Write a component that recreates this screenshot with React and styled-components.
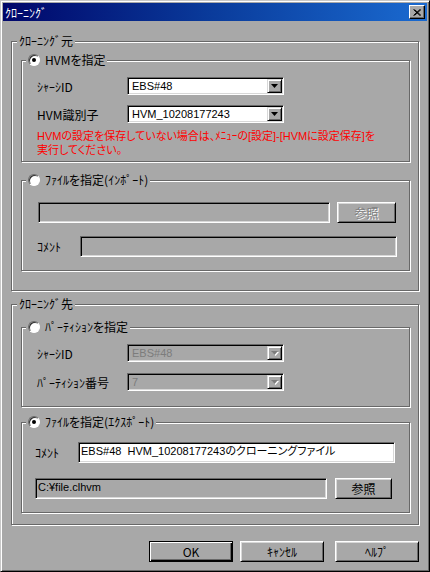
import React from 'react';
import styled, { createGlobalStyle } from 'styled-components';

const FACE = '#a8a8a8';
const FRAME = '#686868';
const LIGHT = '#d8d8d8';

const Global = createGlobalStyle`
  html, body { margin: 0; padding: 0; background: ${FACE}; }
  body {
    font-family: "Noto Sans CJK JP", "Liberation Sans", sans-serif;
    font-size: 12px;
    font-feature-settings: "palt" 1;
    color: #000;
  }
  * { box-sizing: border-box; }
`;

const Window = styled.div`
  width: 430px;
  height: 572px;
  background: ${FACE};
  border: 1px solid;
  border-color: #c8c8c8 #000 #000 #c8c8c8;
  box-shadow: inset 1px 1px #fff, inset -1px -1px ${FRAME};
  padding: 2px;
  display: flex;
  flex-direction: column;
`;

const TitleBar = styled.div`
  height: 18px;
  flex: none;
  background: linear-gradient(90deg, #00066a 0%, #0a3c9c 50%, #1a6ad0 100%);
  display: flex;
  align-items: center;
  justify-content: space-between;
  padding: 0 2px 0 2px;
`;

const Title = styled.span`
  color: #fff;
  line-height: 13px;
  white-space: nowrap;
`;

const CloseBtn = styled.div`
  width: 16px;
  height: 14px;
  background: ${FACE};
  border: 1px solid;
  border-color: #fff #000 #000 #fff;
  box-shadow: inset -1px -1px ${FRAME};
  display: flex;
  align-items: center;
  justify-content: center;
`;

const Body = styled.div`
  flex: 1;
  padding: 0 8px;
  display: flex;
  flex-direction: column;
`;

const Group = styled.div`
  position: relative;
  border: 1px solid ${FRAME};
  box-shadow: inset 1px 1px #fff, 1px 1px #fff;
  margin-top: ${p => p.$mt || 0}px;
  margin-left: ${p => (p.$inner ? 9 : 0)}px;
  width: ${p => (p.$inner ? '389px' : 'auto')};
  padding: ${p => p.$pt}px 0 ${p => p.$pb}px ${p => p.$pl || 0}px;
  display: flex;
  flex-direction: column;
`;

const Legend = styled.div`
  position: absolute;
  top: -8px;
  left: ${p => p.$left}px;
  background: ${FACE};
  padding: 0 2px;
  line-height: 13px;
  height: 13px;
  display: flex;
  align-items: center;
  gap: 5px;
  white-space: nowrap;
`;

const Radio = styled.span`
  position: relative;
  width: 12px;
  height: 12px;
  border-radius: 50%;
  background: #fff;
  border: 1px solid;
  border-color: ${FRAME} #fff #fff ${FRAME};
  box-shadow: inset 1px 1px #303030;
  flex: none;
  &::after {
    content: '';
    display: ${p => (p.$checked ? 'block' : 'none')};
    position: absolute;
    left: 3px;
    top: 3px;
    width: 4px;
    height: 4px;
    border-radius: 50%;
    background: #000;
  }
`;

const Row = styled.div`
  display: flex;
  align-items: center;
  height: ${p => p.$h || 18}px;
  margin-top: ${p => p.$mt || 0}px;
  padding-left: ${p => p.$pl || 0}px;
`;

const Label = styled.span`
  width: ${p => p.$w}px;
  flex: none;
  line-height: 13px;
  white-space: nowrap;
`;

const Field = styled.div`
  width: ${p => p.$w}px;
  height: 21px;
  flex: none;
  border: 1px solid;
  border-color: ${FRAME} #fff #fff ${FRAME};
  box-shadow: inset 1px 1px #000, inset -1px -1px ${LIGHT};
  background: ${p => (p.$disabled ? FACE : '#fff')};
  padding: 2px 2px 0 2px;
  font-family: "Liberation Sans", "Noto Sans CJK JP", sans-serif;
  font-size: 11px;
  line-height: 13px;
  white-space: pre;
  overflow: hidden;
`;

const ComboBox = styled.div`
  width: 157px;
  height: 18px;
  flex: none;
  border: 1px solid;
  border-color: ${FRAME} #fff #fff ${FRAME};
  box-shadow: inset 1px 1px #000, inset -1px -1px ${LIGHT};
  background: ${p => (p.$disabled ? FACE : '#fff')};
  color: ${p => (p.$disabled ? '#7c7c7c' : '#000')};
  padding: 1px 1px 1px 4px;
  display: flex;
  align-items: center;
  justify-content: space-between;
  font-family: "Liberation Sans", "Noto Sans CJK JP", sans-serif;
  font-size: 11px;
  line-height: 13px;
`;

const ArrowBtn = styled.span`
  width: 15px;
  height: 14px;
  flex: none;
  background: ${FACE};
  border: 1px solid;
  border-color: ${LIGHT} #000 #000 ${LIGHT};
  box-shadow: inset 1px 1px #fff, inset -1px -1px ${FRAME};
  display: flex;
  align-items: center;
  justify-content: center;
`;

const Warning = styled.div`
  margin-top: 6px;
  color: #ff0000;
  font-family: "Liberation Sans", "Noto Sans CJK JP", sans-serif;
  font-size: 11px;
  line-height: 14px;
  white-space: nowrap;
`;

const Button = styled.button`
  width: ${p => p.$w}px;
  height: 21px;
  flex: none;
  margin-left: ${p => p.$ml || 0}px;
  background: ${FACE};
  border: 1px solid;
  border-color: ${p => (p.$default ? '#000' : '#fff #000 #000 #fff')};
  box-shadow: ${p =>
    p.$default
      ? `inset 1px 1px #fff, inset -1px -1px #000, inset -2px -2px ${FRAME}`
      : `inset 1px 1px ${LIGHT}, inset -1px -1px ${FRAME}`};
  font: inherit;
  font-feature-settings: "palt" 1;
  line-height: 13px;
  padding: 0;
  color: ${p => (p.disabled ? '#808080' : '#000')};
  text-shadow: ${p => (p.disabled ? '1px 1px #fff' : 'none')};
`;

const ButtonRow = styled.div`
  display: flex;
  justify-content: flex-end;
  margin-top: 16px;
`;

const Combo = ({ value, disabled }) => (
  <ComboBox $disabled={disabled}>
    <span>{value}</span>
    <ArrowBtn>
      <svg width="8" height="5" viewBox="0 0 8 5">
        {disabled && <polygon points="1,1 8,1 4.5,5" fill="#fff" />}
        <polygon points="0,0 7,0 3.5,4" fill={disabled ? '#7c7c7c' : '#000'} />
      </svg>
    </ArrowBtn>
  </ComboBox>
);

export default function App() {
  return (
    <>
      <Global />
      <Window>
        <TitleBar>
          <Title>ｸﾛｰﾆﾝｸﾞ</Title>
          <CloseBtn>
            <svg width="8" height="7" viewBox="0 0 8 7">
              <path d="M0.5 0.5 L7 6.5 M1.5 0.5 L8 6.5 M7 0.5 L0.5 6.5 M8 0.5 L1.5 6.5" stroke="#000" strokeWidth="1" />
            </svg>
          </CloseBtn>
        </TitleBar>
        <Body>
          <Group $mt={20} $pt={18} $pb={19}>
            <Legend $left={5}>ｸﾛｰﾆﾝｸﾞ元</Legend>
            <Group $inner $pt={16} $pb={4} $pl={15}>
              <Legend $left={4}><Radio $checked />HVMを指定</Legend>
              <Row>
                <Label $w={90}>ｼｬｰｼID</Label>
                <Combo value="EBS#48" />
              </Row>
              <Row $mt={10}>
                <Label $w={90}>HVM識別子</Label>
                <Combo value="HVM_10208177243" />
              </Row>
              <Warning>
                HVMの設定を保存していない場合は、ﾒﾆｭｰの[設定]-[HVMに設定保存]を
                <br />
                実行してください。
              </Warning>
            </Group>
            <Group $inner $mt={18} $pt={21} $pb={13} $pl={15}>
              <Legend $left={4}><Radio />ﾌｧｲﾙを指定(ｲﾝﾎﾟｰﾄ)</Legend>
              <Row $h={21} $pl={1}>
                <Field $w={292} $disabled />
                <Button $w={59} $ml={7} disabled>参照</Button>
              </Row>
              <Row $h={21} $mt={13}>
                <Label $w={43}>ｺﾒﾝﾄ</Label>
                <Field $w={317} $disabled />
              </Row>
            </Group>
          </Group>

          <Group $mt={13} $pt={22} $pb={11}>
            <Legend $left={5}>ｸﾛｰﾆﾝｸﾞ先</Legend>
            <Group $inner $pt={16} $pb={15} $pl={15}>
              <Legend $left={4}><Radio />ﾊﾟｰﾃｨｼｮﾝを指定</Legend>
              <Row>
                <Label $w={90}>ｼｬｰｼID</Label>
                <Combo value="EBS#48" disabled />
              </Row>
              <Row $mt={11}>
                <Label $w={90}>ﾊﾟｰﾃｨｼｮﾝ番号</Label>
                <Combo value="7" disabled />
              </Row>
            </Group>
            <Group $inner $mt={15} $pt={19} $pb={13} $pl={13}>
              <Legend $left={4}><Radio $checked />ﾌｧｲﾙを指定(ｴｸｽﾎﾟｰﾄ)</Legend>
              <Row $h={21}>
                <Label $w={43}>ｺﾒﾝﾄ</Label>
                <Field $w={317}>{'EBS#48  HVM_10208177243のクローニングファイル'}</Field>
              </Row>
              <Row $h={21} $mt={15}>
                <Field $w={292} $disabled>C:¥file.clhvm</Field>
                <Button $w={57} $ml={8}>参照</Button>
              </Row>
            </Group>
          </Group>

          <ButtonRow>
            <Button $w={84} $default>OK</Button>
            <Button $w={84} $ml={7}>ｷｬﾝｾﾙ</Button>
            <Button $w={84} $ml={11}>ﾍﾙﾌﾟ</Button>
          </ButtonRow>
        </Body>
      </Window>
    </>
  );
}
